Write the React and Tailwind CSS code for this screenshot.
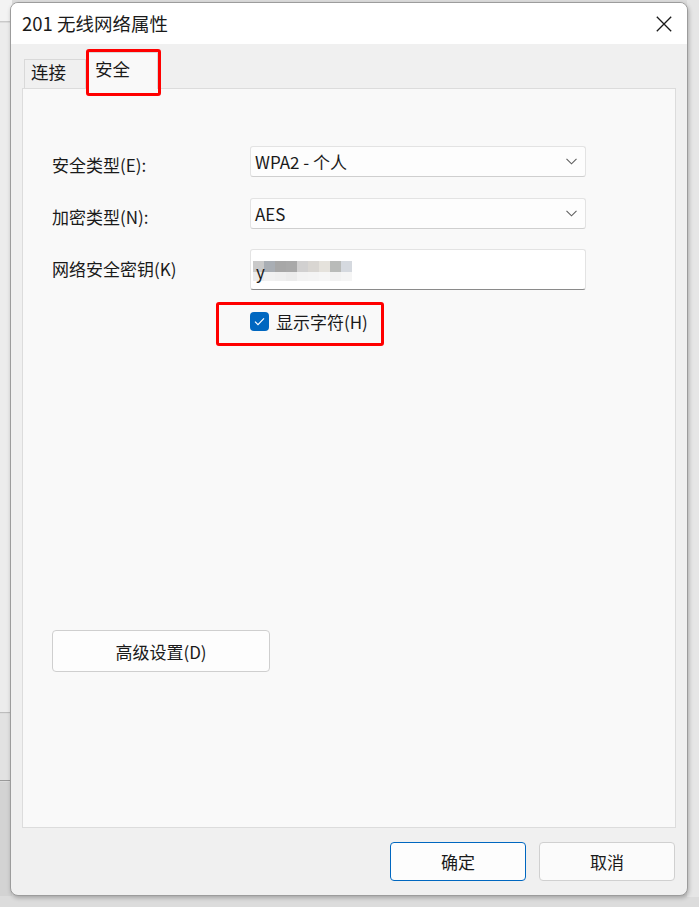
import React, { useState } from 'react';

const font = { fontFamily: '"Noto Sans CJK SC", "Noto Sans", sans-serif' };

function Chevron() {
  return (
    <svg width="11" height="7" viewBox="0 0 11 7" fill="none" stroke="#5f5f5f" strokeWidth="1.1">
      <path d="M0.5 0.8 5.5 5.8 10.5 0.8" />
    </svg>
  );
}

function Select({ value }) {
  return (
    <div className="w-[336px] h-[31px] flex items-center justify-between pl-[4px] pr-[8px] bg-[#fdfdfd] border border-[#e3e3e3] border-b-[#cfcfcf] rounded-[3px] text-[17px] text-[#1a1a1a] leading-none">
      <span>{value}</span>
      <Chevron />
    </div>
  );
}

// pixelated key, blurred in the original capture
const mosaicTop = ['#c9c9c9', '#a9aeb4', '#a7a7a7', '#a9a9a9', '#d1d0d0', '#d9d6d2', '#e5e2dc', '#b9bbb9', '#d5d9df'];
const mosaicBottom = ['#ececec', '#f1f1f1', '#efefef', '#ececec', '#f3f3f3', '#f4f4f4', '#f6f6f6', '#f2f2f2', '#f5f5f5'];

function KeyField() {
  return (
    <div className="w-[336px] h-[41px] bg-white border border-[#e3e3e3] border-b-[#8a8a8a] rounded-[3px] flex items-center pl-[2px]">
      <div className="relative flex flex-col mt-[2px]">
        <div className="flex">
          {mosaicTop.map((c, i) => (
            <div key={i} className="w-[11px] h-[11px]" style={{ background: c }} />
          ))}
        </div>
        <div className="flex">
          {mosaicBottom.map((c, i) => (
            <div key={i} className="w-[11px] h-[9px]" style={{ background: c }} />
          ))}
        </div>
        <span className="absolute left-[3px] top-[2px] text-[17px] leading-none text-[#1a1a1a]">y</span>
      </div>
    </div>
  );
}

export default function App() {
  const [showChars, setShowChars] = useState(true);

  return (
    <div className="relative w-[699px] h-[907px] overflow-hidden bg-[#dcdcdc] pl-[10px] pt-[2px]" style={font}>
      {/* desktop behind the dialog */}
      <div className="absolute left-0 top-0 w-[12px] h-[22px] bg-[#f3f3f3] border-b border-[#c9c9c9]" />
      <div className="absolute left-0 top-[23px] w-[12px] h-[690px] bg-[#ececec] border-b border-[#bdbdbd]" />
      <div className="absolute left-0 top-[714px] w-[12px] h-[67px] bg-[#e2e2e2] border-b border-[#9a9a9a]" />
      <div className="absolute left-0 top-[782px] w-[12px] h-[114px] bg-[#d3d3d3]" />
      <div className="absolute right-0 top-0 w-[12px] h-[897px] bg-[#e6e6e6]" />

      {/* dialog window */}
      <div className="relative w-[678px] h-[894px] flex flex-col bg-[#f0f0f0] border border-[#9c9c9c] rounded-[8px] overflow-hidden shadow-[1px_2px_4px_rgba(0,0,0,0.25)]">
        {/* title bar */}
        <div className="h-[41px] shrink-0 bg-white flex items-center justify-between pl-[11px] pr-[15px]">
          <span className="text-[18.5px] leading-none text-[#1a1a1a]">201 无线网络属性</span>
          <svg width="16" height="16" viewBox="0 0 16 16" stroke="#1a1a1a" strokeWidth="1.3">
            <path d="M0.8 0.8 15.2 15.2M15.2 0.8 0.8 15.2" />
          </svg>
        </div>

        {/* body */}
        <div className="relative flex-1 flex flex-col px-[11px] pb-[13px]">
          {/* tabs */}
          <div className="h-[44px] flex items-end pl-[2px]">
            <div className="w-[62px] h-[29px] border border-b-0 border-[#d9d9d9] pl-[6px] pb-[4px] flex items-center text-[17.5px] leading-none text-[#1a1a1a]">
              连接
            </div>
            <div className="relative z-10 -mb-px w-[72px] h-[37px] bg-[#f9f9f9] border border-b-0 border-[#d9d9d9] pl-[8px] pb-[5px] flex items-center text-[17.5px] leading-none text-[#1a1a1a]">
              安全
            </div>
          </div>
          <div className="absolute left-[75px] top-[5px] w-[75px] h-[47px] border-[3px] border-[#ff0000] rounded-[3px] z-20" />

          {/* tab panel */}
          <div className="h-[740px] bg-[#f9f9f9] border border-[#dcdcdc] pt-[57px] pl-[29px] text-[17px] leading-none text-[#1a1a1a]">
            <div className="flex items-center">
              <span className="w-[198px] pt-[5px]">安全类型(E):</span>
              <Select value="WPA2 - 个人" />
            </div>
            <div className="flex items-center mt-[21px]">
              <span className="w-[198px] pt-[5px]">加密类型(N):</span>
              <Select value="AES" />
            </div>
            <div className="flex items-center mt-[20px]">
              <span className="w-[198px] pb-[3px]">网络安全密钥(K)</span>
              <KeyField />
            </div>

            <div className="relative mt-[22px] pl-[198px] flex items-center gap-[7px] h-[19px]">
              <button
                onClick={() => setShowChars(!showChars)}
                className={`w-[19px] h-[19px] rounded-[4px] flex items-center justify-center ${
                  showChars ? 'bg-[#0067c0]' : 'bg-white border border-[#8a8a8a]'
                }`}
              >
                {showChars && (
                  <svg width="11" height="9" viewBox="0 0 11 9" fill="none" stroke="white" strokeWidth="1.2">
                    <path d="M1 4.6 4 7.6 10 1.4" />
                  </svg>
                )}
              </button>
              <span>显示字符(H)</span>
              <div className="absolute left-[164px] top-[-10px] w-[168px] h-[44px] border-[3px] border-[#ff0000] rounded-[3px]" />
            </div>

            <button className="mt-[299px] w-[218px] h-[42px] bg-[#fdfdfd] border border-[#cfcfcf] rounded-[4px] flex items-center justify-center">
              高级设置(D)
            </button>
          </div>

          {/* dialog buttons */}
          <div className="flex justify-end gap-[13px] mt-[14px] text-[17px] leading-none text-[#1a1a1a]">
            <button className="w-[136px] h-[39px] bg-[#fdfdfd] border border-[#0067c0] rounded-[4px]">确定</button>
            <button className="w-[136px] h-[39px] bg-[#fbfbfb] border border-[#d0d0d0] rounded-[4px] mr-[1px]">取消</button>
          </div>
        </div>
      </div>
    </div>
  );
}
